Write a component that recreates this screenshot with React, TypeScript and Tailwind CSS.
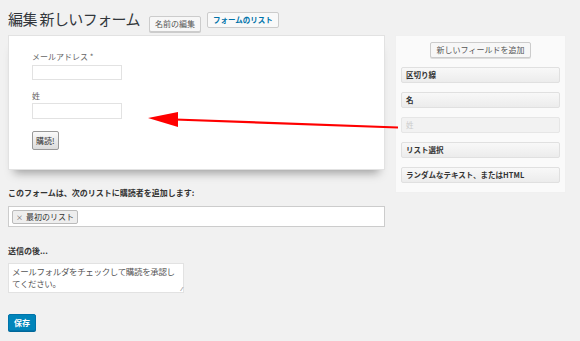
import React from "react";

const font = { fontFamily: '"Noto Sans CJK JP", "Noto Sans", sans-serif' };

const fields = [
  { label: "区切り線", muted: false },
  { label: "名", muted: false },
  { label: "姓", muted: true },
  { label: "リスト選択", muted: false },
  { label: "ランダムなテキスト、またはHTML", muted: false },
];

export default function App() {
  return (
    <div
      className="relative w-[580px] h-[341px] bg-[#f1f1f1] overflow-hidden px-2 pt-[8px]"
      style={font}
    >
      {/* header */}
      <div className="flex items-start h-[27px]">
        <h1 className="text-[15px] leading-[22px] text-[#32373c] tracking-[-0.6px] mr-[9px]">
          編集 新しいフォーム
        </h1>
        <button className="mt-[8px] h-[16px] px-[5px] text-[8px] leading-[14px] text-[#555] bg-[#f7f7f7] border border-[#ccc] rounded-[2px] shadow-[0_1px_0_#ccc] mr-[6px]">
          名前の編集
        </button>
        <button className="mt-[4px] h-[16px] px-[5px] text-[7.5px] leading-[14px] font-bold text-[#0073aa] bg-[#f9f9f9] border border-[#ccc] rounded-[2px]">
          フォームのリスト
        </button>
      </div>

      <div className="flex gap-[10px]">
        {/* left column */}
        <div className="w-[377px]">
          <div className="h-[135px] bg-white border border-[#e2e2e2] shadow-[0_9px_9px_-6px_rgba(0,0,0,0.35)] pl-[23px] pt-[15px]">
            <div className="text-[8px] leading-[12px] text-[#666]">メールアドレス *</div>
            <div className="mt-[2px] w-[90px] h-[15px] border border-[#e2e2e2] bg-white"></div>
            <div className="mt-[10px] text-[8px] leading-[12px] text-[#666]">姓</div>
            <div className="mt-[1px] w-[90px] h-[16px] border border-[#e2e2e2] bg-white"></div>
            <button className="mt-[12px] h-[19px] px-[3px] text-[8px] leading-[17px] text-[#333] bg-gradient-to-b from-[#fafafa] to-[#dcdcdc] border border-[#999] rounded-[2px]">
              購読!
            </button>
          </div>

          <div className="mt-[17px] text-[8px] leading-[12px] font-bold text-[#333]">
            このフォームは、次のリストに購読者を追加します:
          </div>
          <div className="mt-[7px] h-[21px] bg-white border border-[#ccc] flex items-center px-[3px]">
            <span className="h-[14px] px-[3px] flex items-center gap-[3px] bg-[#eee] border border-[#bbb] rounded-[2px] text-[8px] leading-[12px] text-[#333]">
              <span className="text-[7px] text-[#555]">×</span>最初のリスト
            </span>
          </div>

          <div className="mt-[18px] text-[8px] leading-[12px] font-bold text-[#333]">送信の後...</div>
          <div className="relative mt-[6px] w-[176px] h-[30px] bg-white border border-[#e2e2e2] px-[3px] py-[1px] text-[8.5px] leading-[12px] tracking-[-0.35px] text-[#555]">
            メールフォルダをチェックして購読を承認してください。
            <span className="absolute right-[1px] bottom-0 text-[6px] leading-[6px] text-[#999]">⁄⁄</span>
          </div>

          <button className="mt-[21px] h-[17px] w-[28px] text-[8px] leading-[15px] font-bold text-white bg-[#0085ba] border border-[#0073aa] rounded-[2px] shadow-[0_1px_0_#006799]">
            保存
          </button>
        </div>

        {/* right column */}
        <div className="w-[171px] h-[158px] bg-[#fafafa] border border-[#f0f0f0] px-[5px] pt-[6px]">
          <div className="flex justify-center">
            <button className="h-[16px] px-[6px] text-[8px] leading-[14px] text-[#555] bg-[#f7f7f7] border border-[#ccc] rounded-[2px] shadow-[0_1px_0_#ddd]">
              新しいフィールドを追加
            </button>
          </div>
          <div className="mt-[9px] flex flex-col gap-[9px]">
            {fields.map((f) => (
              <div
                key={f.label}
                className={
                  f.muted
                    ? "h-[16px] px-[4px] flex items-center rounded-[2px] border border-[#e6e6e6] bg-[#f2f2f2] text-[7.5px] text-[#ccc]"
                    : "h-[16px] px-[4px] flex items-center rounded-[2px] border border-[#e0e0e0] bg-gradient-to-b from-[#f8f8f8] to-[#ececec] text-[7.5px] font-bold text-[#333]"
                }
              >
                {f.label}
              </div>
            ))}
          </div>
        </div>
      </div>

      {/* annotation arrow */}
      <svg className="absolute left-0 top-0" width="580" height="341" viewBox="0 0 580 341">
        <line x1="398" y1="127.5" x2="175" y2="119.5" stroke="#ff0000" strokeWidth="2.2" />
        <polygon points="148,118 178,112 178,127" fill="#ff0000" />
      </svg>
    </div>
  );
}
